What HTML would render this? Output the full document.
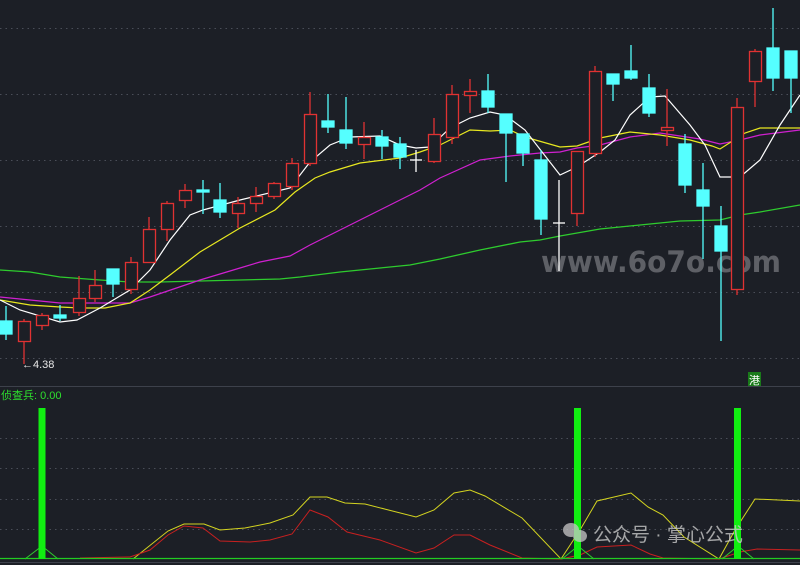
<!DOCTYPE html>
<html><head><meta charset="utf-8"><style>
html,body{margin:0;padding:0;background:#1c1f26;width:800px;height:565px;overflow:hidden}
svg{display:block}
</style></head><body>
<svg width="800" height="565" viewBox="0 0 800 565" xmlns="http://www.w3.org/2000/svg">
<rect width="800" height="565" fill="#1c1f26"/>
<g stroke="#4a4e58" stroke-width="1" stroke-dasharray="1.5,4">
<line x1="0" y1="28.5" x2="800" y2="28.5"/><line x1="0" y1="94.5" x2="800" y2="94.5"/>
<line x1="0" y1="160.5" x2="800" y2="160.5"/><line x1="0" y1="226.5" x2="800" y2="226.5"/>
<line x1="0" y1="292.5" x2="800" y2="292.5"/><line x1="0" y1="358.5" x2="800" y2="358.5"/>
<line x1="0" y1="438.5" x2="800" y2="438.5"/><line x1="0" y1="468.5" x2="800" y2="468.5"/>
<line x1="0" y1="499.5" x2="800" y2="499.5"/><line x1="0" y1="529.5" x2="800" y2="529.5"/>
</g>
<line x1="0" y1="386.5" x2="800" y2="386.5" stroke="#3d414b"/>
<!-- watermark -->
<text x="541" y="272" font-family="'DejaVu Sans','Liberation Sans',sans-serif" font-size="29" font-weight="bold" fill="#5e6066" textLength="240" lengthAdjust="spacingAndGlyphs">www.6o7o.com</text>
<!-- MA lines -->
<polyline fill="none" stroke="#2ecc2e" stroke-width="1.3" points="0,270 30,272 60,277 100,280 130,282 160,282 200,281 240,280 280,279 300,277 340,272 380,268 410,265 440,259 480,250 520,242 540,240 560,236 600,229 640,225 680,221 720,220 740,215 760,212 800,205"/>
<polyline fill="none" stroke="#d020d0" stroke-width="1.2" points="0,297 30,300 60,303 100,303 130,303 150,297 200,280 240,268 260,262 290,256 310,245 340,230 380,210 400,200 420,190 440,178 480,160 510,156 540,153 560,152 577,148 600,145 630,137 660,133 700,139 720,144 740,140 760,135 800,130"/>
<polyline fill="none" stroke="#e8e820" stroke-width="1.2" points="0,300 30,305 60,307 80,308 105,308 130,303 150,290 170,275 200,252 240,228 275,210 295,192 315,178 330,172 360,163 400,158 420,152 440,145 470,130 490,131 510,130 525,137 560,147 577,146 600,138 630,132 660,135 690,140 712,146 720,149 745,133 760,128 800,128"/>
<polyline fill="none" stroke="#ffffff" stroke-width="1.2" points="0,300 20,310 60,322 77,320 100,308 130,290 150,270 170,240 190,215 203,210 240,200 290,188 310,162 330,145 350,137 380,136 400,145 416,148 430,147 450,128 470,118 490,112 505,115 525,130 560,175 577,167 600,152 615,140 630,115 650,97 665,96 690,125 705,145 720,177 740,177 760,160 780,125 800,95"/>
<!-- candles -->
<g stroke-width="1.3">
<g stroke="#5ff" fill="#5ff">
<line x1="6" y1="306" x2="6" y2="340"/><rect x="0" y="321" width="12" height="13"/>
<line x1="60" y1="305" x2="60" y2="321"/><rect x="54" y="315" width="12" height="3"/>
<line x1="113" y1="269" x2="113" y2="297"/><rect x="107" y="269" width="12" height="15"/>
<line x1="203" y1="180" x2="203" y2="214"/><rect x="197" y="190" width="12" height="2"/>
<line x1="220" y1="183" x2="220" y2="218"/><rect x="214" y="200" width="12" height="12"/>
<line x1="328" y1="94" x2="328" y2="133"/><rect x="322" y="121" width="12" height="6"/>
<line x1="346" y1="97" x2="346" y2="149"/><rect x="340" y="130" width="12" height="13"/>
<line x1="382" y1="130" x2="382" y2="159"/><rect x="376" y="137" width="12" height="9"/>
<line x1="400" y1="137" x2="400" y2="169"/><rect x="394" y="144" width="12" height="13"/>
<line x1="488" y1="74" x2="488" y2="113"/><rect x="482" y="91" width="12" height="16"/>
<line x1="506" y1="114" x2="506" y2="182"/><rect x="500" y="114" width="12" height="19"/>
<line x1="523" y1="134" x2="523" y2="166"/><rect x="517" y="134" width="12" height="19"/>
<line x1="541" y1="150" x2="541" y2="235"/><rect x="535" y="160" width="12" height="59"/>
<line x1="613" y1="74" x2="613" y2="101"/><rect x="607" y="74" width="12" height="10"/>
<line x1="631" y1="45" x2="631" y2="80"/><rect x="625" y="71" width="12" height="7"/>
<line x1="649" y1="74" x2="649" y2="117"/><rect x="643" y="88" width="12" height="25"/>
<line x1="685" y1="134" x2="685" y2="193"/><rect x="679" y="144" width="12" height="41"/>
<line x1="703" y1="163" x2="703" y2="259"/><rect x="697" y="190" width="12" height="16"/>
<line x1="721" y1="206" x2="721" y2="341"/><rect x="715" y="226" width="12" height="25"/>
<line x1="773" y1="8" x2="773" y2="91"/><rect x="767" y="48" width="12" height="30"/>
<line x1="791" y1="51" x2="791" y2="113"/><rect x="785" y="51" width="12" height="27"/>
</g>
<g stroke="#e03232" fill="#1c1f26">
<line x1="24" y1="319" x2="24" y2="364"/><rect x="18.5" y="321.5" width="12" height="20"/>
<line x1="42" y1="313" x2="42" y2="330"/><rect x="36.5" y="315.5" width="12" height="10"/>
<line x1="79" y1="276" x2="79" y2="316"/><rect x="73.5" y="298.5" width="12" height="14"/>
<line x1="95" y1="270" x2="95" y2="302"/><rect x="89.5" y="285.5" width="12" height="13"/>
<line x1="131" y1="257" x2="131" y2="294"/><rect x="125.5" y="262.5" width="12" height="27"/>
<line x1="149" y1="217" x2="149" y2="262"/><rect x="143.5" y="229.5" width="12" height="33"/>
<line x1="167" y1="201" x2="167" y2="241"/><rect x="161.5" y="203.5" width="12" height="26"/>
<line x1="185" y1="184" x2="185" y2="208"/><rect x="179.5" y="190.5" width="12" height="10"/>
<line x1="238" y1="197" x2="238" y2="228"/><rect x="232.5" y="203.5" width="12" height="10"/>
<line x1="256" y1="187" x2="256" y2="212"/><rect x="250.5" y="196.5" width="12" height="7"/>
<line x1="274" y1="182" x2="274" y2="199"/><rect x="268.5" y="183.5" width="12" height="13"/>
<line x1="292" y1="158" x2="292" y2="190"/><rect x="286.5" y="163.5" width="12" height="23"/>
<line x1="310" y1="92" x2="310" y2="166"/><rect x="304.5" y="114.5" width="12" height="49"/>
<line x1="364" y1="122" x2="364" y2="159"/><rect x="358.5" y="137.5" width="12" height="7"/>
<line x1="434" y1="118" x2="434" y2="163"/><rect x="428.5" y="134.5" width="12" height="27"/>
<line x1="452" y1="85" x2="452" y2="144"/><rect x="446.5" y="94.5" width="12" height="43"/>
<line x1="470" y1="79" x2="470" y2="113"/><rect x="464.5" y="91.5" width="12" height="4"/>
<line x1="577" y1="151" x2="577" y2="226"/><rect x="571.5" y="151.5" width="12" height="62"/>
<line x1="595" y1="66" x2="595" y2="157"/><rect x="589.5" y="71.5" width="12" height="82"/>
<line x1="667" y1="89" x2="667" y2="146"/><rect x="661.5" y="127.5" width="12" height="3"/>
<line x1="737" y1="98" x2="737" y2="295"/><rect x="731.5" y="107.5" width="12" height="182"/>
<line x1="755" y1="49" x2="755" y2="107"/><rect x="749.5" y="51.5" width="12" height="30"/>
</g>
<g stroke="#fff">
<line x1="416" y1="150" x2="416" y2="172"/><line x1="410" y1="160" x2="422" y2="160"/>
<line x1="559" y1="180" x2="559" y2="271"/><line x1="553" y1="223" x2="565" y2="223"/>
</g>
</g>
<text x="22" y="368" font-family="'Liberation Sans',sans-serif" font-size="11" fill="#e8e8e8">←4.38</text>
<rect x="748" y="372" width="13" height="14" fill="#1a7a1a"/>
<text x="749" y="384" font-family="'Liberation Sans','Noto Sans CJK SC',sans-serif" font-size="11" fill="#fff">港</text>
<!-- lower panel -->
<text x="1" y="399" font-family="'Liberation Sans','Noto Sans CJK SC',sans-serif" font-size="11" fill="#2ee02e">侦查兵: 0.00</text>
<polyline fill="none" stroke="#d4d420" stroke-width="1" points="133,559 168,531 184,524 204,524 220,530 245,528 270,523 293,515 310,497 327,497 345,503 365,504 416,517 434,510 454,493 470,490 485,496 522,518 561,559 580,530 597,501 631,493 648,507 663,515 684,537 719,559 735,530 755,499 800,501"/>
<polyline fill="none" stroke="#c82020" stroke-width="1" points="80,558 130,557 150,550 168,535 184,526 203,528 220,541 250,542 270,540 292,534 310,510 328,517 347,532 380,540 416,553 434,548 454,535 470,535 490,545 522,558 561,559 580,555 597,547 631,545 650,554 663,558 719,559 740,552 757,549 800,550"/>
<g fill="none" stroke="#2ecc2e" stroke-width="1">
<polyline points="25,559 42,546 58,559"/><polyline points="562,559 578,546 594,559"/><polyline points="722,559 738,546 754,559"/>
</g>
<line x1="0" y1="558.5" x2="800" y2="558.5" stroke="#22cc22" stroke-width="1.3"/>
<line x1="0" y1="562.5" x2="800" y2="562.5" stroke="#3d414b"/>
<rect x="38.5" y="408" width="7" height="151" fill="#11ee11"/>
<rect x="574" y="408" width="7" height="151" fill="#11ee11"/>
<rect x="734" y="408" width="7" height="151" fill="#11ee11"/>
<!-- wechat watermark -->
<g opacity="0.75" fill="#c8c8c8">
<ellipse cx="571" cy="530" rx="8" ry="7"/><ellipse cx="580" cy="536" rx="7" ry="6"/>
</g>
<text x="593" y="541" font-family="'Liberation Sans','Noto Sans CJK SC',sans-serif" font-size="19" fill="#c8c8c8" opacity="0.8">公众号 · 掌心公式</text>
</svg>
</body></html>
